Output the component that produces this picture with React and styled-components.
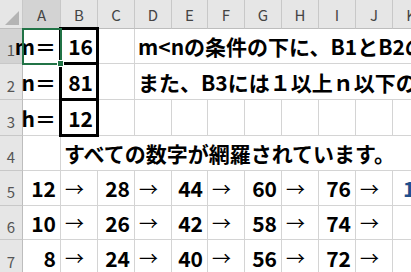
import styled, { createGlobalStyle, css } from 'styled-components'

const GlobalStyle = createGlobalStyle`
  body {
    margin: 0;
    background: #fff;
  }
`

const Sheet = styled.div`
  width: 411px;
  height: 272px;
  overflow: hidden;
  display: grid;
  grid-template-columns: 23px 38px 37px 37px 37px 36px 37px 37px 37px 37px 37px 37px 40px;
  grid-template-rows: 29px 35px 36px 36px 35px 35px 34px 36px;
  font-family: "Noto Sans CJK JP", "Noto Sans", sans-serif;
  background: #fff;
`

const Corner = styled.div`
  position: relative;
  background: #e6e6e6;
  border-right: 1px solid #c8c8c8;
  border-bottom: 1px solid #bdbdbd;
  box-sizing: border-box;

  &::after {
    content: '';
    position: absolute;
    right: 3px;
    bottom: 3px;
    width: 0;
    height: 0;
    border-left: 14px solid transparent;
    border-bottom: 14px solid #b4b4b4;
  }
`

const ColHeader = styled.div`
  display: flex;
  align-items: center;
  justify-content: center;
  box-sizing: border-box;
  background: ${p => (p.$active ? '#d3d3d3' : '#e6e6e6')};
  border-right: 1px solid #c8c8c8;
  border-bottom: 1px solid #bdbdbd;
  color: #444;
  font-size: 15px;
  padding-top: 1px;
`

const RowHeader = styled.div`
  display: flex;
  align-items: center;
  justify-content: center;
  box-sizing: border-box;
  background: ${p => (p.$active ? '#d3d3d3' : '#e6e6e6')};
  border-right: 1px solid #bdbdbd;
  border-bottom: 1px solid #c8c8c8;
  color: #555;
  font-size: 15px;
  padding-top: 7px;
`

const Cell = styled.div`
  position: relative;
  display: flex;
  align-items: center;
  justify-content: ${p => (p.$align === 'right' ? 'flex-end' : 'flex-start')};
  box-sizing: border-box;
  min-width: 0;
  padding: 0 4px 0 4px;
  border-right: 1px solid #d4d4d4;
  border-bottom: 1px solid #d4d4d4;
  font-size: 21px;
  font-weight: 700;
  color: #000;
  white-space: nowrap;
  grid-column: ${p => (p.$span ? `span ${p.$span}` : 'auto')};
  ${p => p.$span && css`border-right: none; padding-left: 3px;`}

  ${p =>
    p.$boxed &&
    css`
      &::after {
        content: '';
        position: absolute;
        left: -2px;
        top: -2px;
        right: -2px;
        bottom: -2px;
        border: 3px solid #000;
        z-index: 2;
      }
    `}
`

const Selection = styled.div`
  position: absolute;
  left: -1px;
  top: -1px;
  right: -2px;
  bottom: -2px;
  border: 2px solid #217346;
  z-index: 3;

  &::after {
    content: '';
    position: absolute;
    right: -4px;
    bottom: -4px;
    width: 5px;
    height: 5px;
    background: #217346;
    border: 1px solid #fff;
  }
`

const Arrow = styled.span`
  font-weight: 400;
  font-size: 19px;
`

const Overflow = styled.span`
  color: #1f4e8c;
  padding-left: 6px;
`

const cols = ['A', 'B', 'C', 'D', 'E', 'F', 'G', 'H', 'I', 'J', 'K']

const chains = [
  [12, 28, 44, 60, 76],
  [10, 26, 42, 58, 74],
  [8, 24, 40, 56, 72],
]

const ChainRow = ({ values, extra }) => (
  <>
    {values.map(v => [
      <Cell key={`v${v}`} $align="right">{v}</Cell>,
      <Cell key={`a${v}`}><Arrow>→</Arrow></Cell>,
    ])}
    <Cell>{extra && <Overflow>{extra}</Overflow>}</Cell>
    <Cell />
  </>
)

export default function App() {
  return (
    <>
      <GlobalStyle />
      <Sheet>
        <Corner />
        {cols.map(c => (
          <ColHeader key={c} $active={c === 'A'}>{c}</ColHeader>
        ))}
        <ColHeader />

        <RowHeader $active>1</RowHeader>
        <Cell $align="right">
          m＝
          <Selection />
        </Cell>
        <Cell $align="right" $boxed>16</Cell>
        <Cell />
        <Cell $span={9}>m&lt;nの条件の下に、B1とB2の値を入れます。</Cell>

        <RowHeader>2</RowHeader>
        <Cell $align="right">n＝</Cell>
        <Cell $align="right" $boxed>81</Cell>
        <Cell />
        <Cell $span={9}>また、B3には１以上ｎ以下の値を入れます。</Cell>

        <RowHeader>3</RowHeader>
        <Cell $align="right">h＝</Cell>
        <Cell $align="right" $boxed>12</Cell>
        {cols.slice(2).map(c => <Cell key={c} />)}
        <Cell />

        <RowHeader>4</RowHeader>
        <Cell />
        <Cell $span={11}>すべての数字が網羅されています。</Cell>

        <RowHeader>5</RowHeader>
        <ChainRow values={chains[0]} extra="1" />

        <RowHeader>6</RowHeader>
        <ChainRow values={chains[1]} />

        <RowHeader>7</RowHeader>
        <ChainRow values={chains[2]} />

        <RowHeader>8</RowHeader>
        {cols.map(c => <Cell key={c} />)}
        <Cell />
      </Sheet>
    </>
  )
}
